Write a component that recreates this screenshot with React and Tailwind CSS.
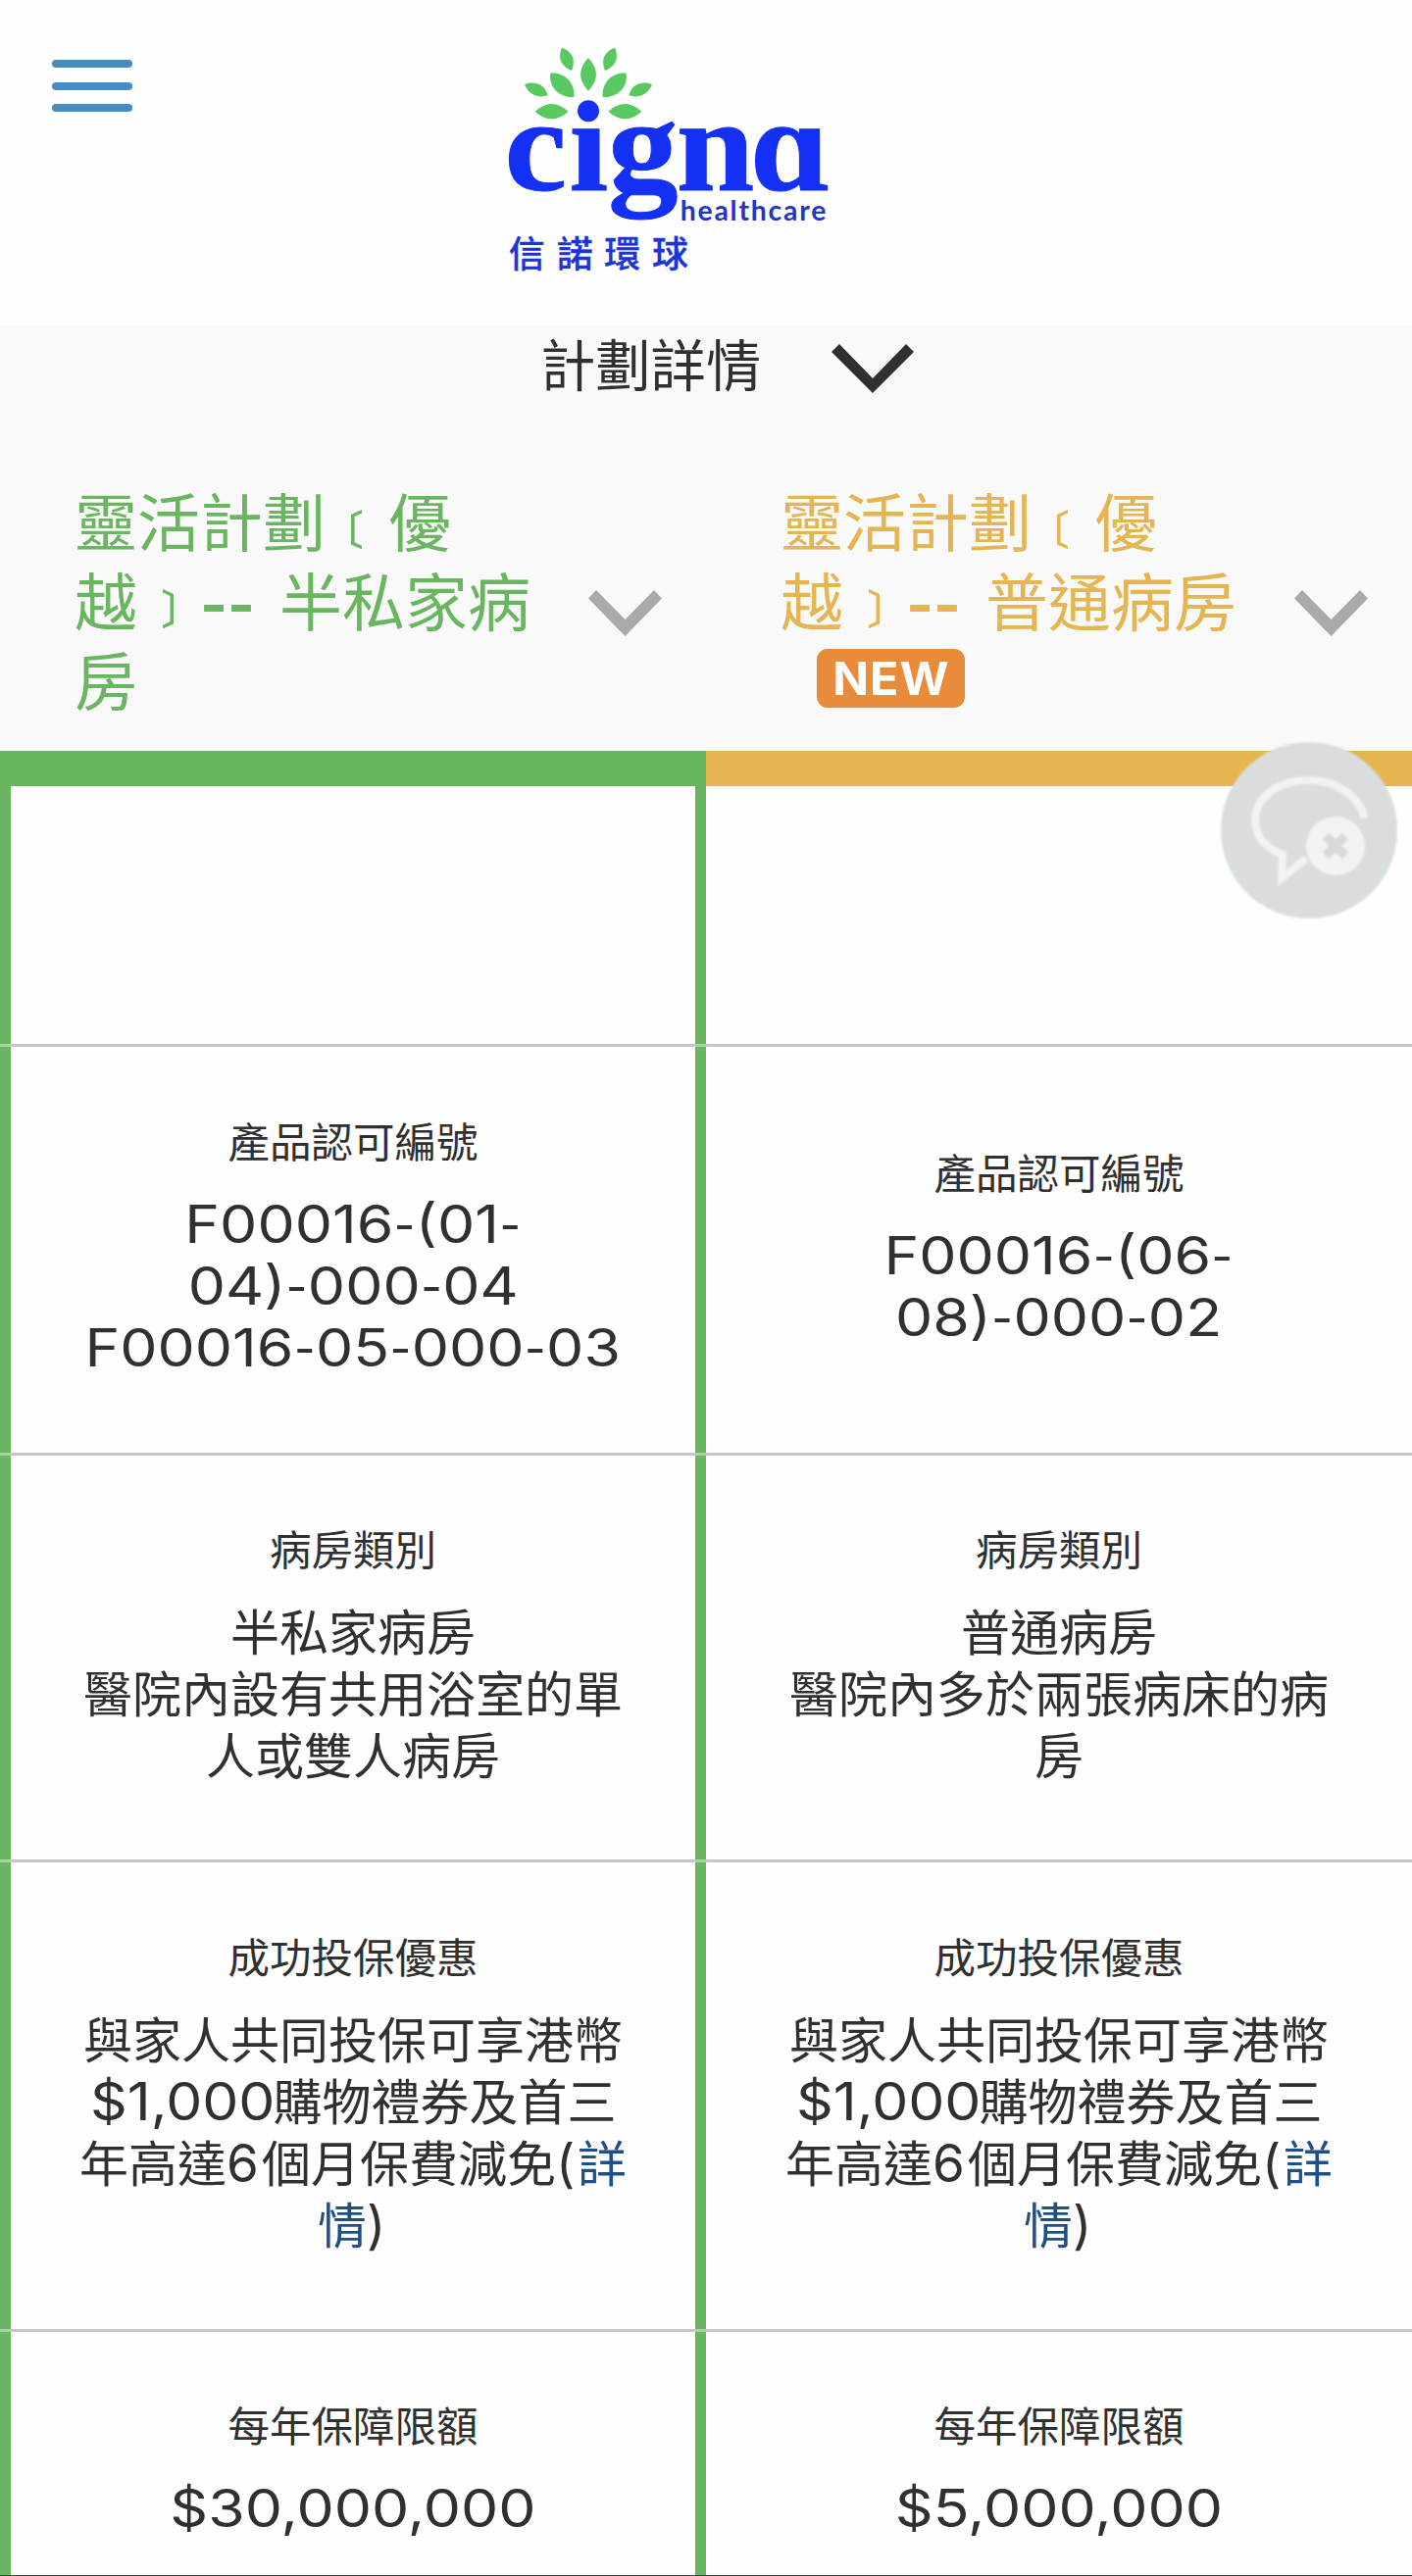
const offer = [
  '與家人共同投保可享港幣',
  <>
    <span className="inline-block w-[187px] origin-left scale-x-[1.11] text-left font-[Inter] text-[53px] leading-[63px]">$1,000</span>
    購物禮券及首三
  </>,
  <>
    年高達
    <span className="inline-block w-[36px] text-left font-[Inter] text-[53px] leading-[63px]">6</span>
    個月保費減免
    <span className="inline-block w-[22px] text-left font-[Inter] text-[53px] leading-[63px]">(</span>
    <a className="text-[#1c4f8b]">詳</a>
  </>,
  <>
    <a className="text-[#1c4f8b]">情</a>
    <span className="inline-block w-[22px] text-left font-[Inter] text-[53px] leading-[63px]">)</span>
  </>,
];

const rows = [
  {
    height: 'h-[417px]',
    label: '產品認可編號',
    left: [<Code text="F00016-(01-" />, <Code text="04)-000-04" />, <Code text="F00016-05-000-03" />],
    right: [<Code text="F00016-(06-" />, <Code text="08)-000-02" />],
  },
  {
    height: 'h-[415px]',
    label: '病房類別',
    left: ['半私家病房', '醫院內設有共用浴室的單', '人或雙人病房'],
    right: ['普通病房', '醫院內多於兩張病床的病', '房'],
  },
  { height: 'h-[479px]', label: '成功投保優惠', left: offer, right: offer },
  {
    height: 'h-[288px]',
    label: '每年保障限額',
    left: [<Code text="$30,000,000" />],
    right: [<Code text="$5,000,000" />],
  },
];

// Latin text alone on its line; the hyphens come from Lato, which has shorter ones
function Code({ text }) {
  return (
    <span className="inline-block scale-x-[1.145] font-[Inter] text-[53px] leading-[65px]">
      {text.split(/(-)/).map((part, i) =>
        part === '-' ? <span key={i} className="font-[Lato] leading-none">-</span> : part
      )}
    </span>
  );
}

const Leaves = () => (
  <>
    <path d="M197 281C232 250 264 250 299 281C264 312 232 312 197 281Z" />
    <path d="M244 164C284 160 320 190 316 237C273 240 238 208 244 164Z" />
    <path d="M279 86C304 94 325 118 309 156C280 145 264 120 279 86Z" />
    <path d="M165 199C190 187 227 195 236 232C210 240 180 235 165 199Z" />
  </>
);

const Logo = () => (
  <svg width="400" height="280" viewBox="0 0 1200 840" aria-label="Cigna Healthcare">
    <g fill="#5bc962">
      <path d="M360 117C392 152 392 184 360 218C328 184 328 152 360 117Z" />
      <Leaves />
      <g transform="translate(720 0) scale(-1 1)">
        <Leaves />
      </g>
    </g>
    <circle cx="360" cy="280" r="33" fill="#1430f5" />
    <text
      transform="scale(1.06 1)"
      x="98 284.5 396 594 806"
      y="523"
      fill="#1430f5"
      stroke="#1430f5"
      strokeWidth="3"
      fontSize="405"
      fontWeight="700"
      fontFamily="Liberation Serif, serif"
    >
      cıgnɑ
    </text>
    <text x="641" y="614" fill="#2036c8" fontSize="85" fontWeight="700" fontFamily="Lato, sans-serif" textLength="446">
      healthcare
    </text>
    <text x="116 263 409 555" y="760" fill="#1c35d8" stroke="#1c35d8" strokeWidth="1" fontSize="111" fontWeight="500" fontFamily="Noto Sans CJK TC, sans-serif">
      信諾環球
    </text>
  </svg>
);

const Chevron = () => (
  <svg className="mt-[113px]" width="75" height="47" viewBox="0 0 75 47" fill="#aaaaaa">
    <path d="M0 8.5L8 0L37.5 30L67 0L75 8.5L37.5 47Z" />
  </svg>
);

const Dashes = () => (
  <span className="inline-block w-[81px] font-[Inter] text-[60px] leading-none font-bold">--</span>
);

const Rail = () => <div className="border-b-[3px] border-[#a8d3a4] bg-[#6ab660]" />;

const Cell = ({ label, lines }) => (
  <div className="flex flex-col items-center justify-center gap-[21px] border-b-[3px] border-[#c6c6c6] pb-[15px] whitespace-nowrap">
    <p className="text-[42.5px] leading-[63px]">{label}</p>
    <div className="text-center text-[50px] leading-[63px]">
      {lines.map((line, i) => (
        <div key={i} className="h-[63px]">{line}</div>
      ))}
    </div>
  </div>
);

const ChatButton = () => (
  <button className="absolute top-[757px] left-[1245px] blur-[1px]">
    <svg width="180" height="180" viewBox="0 0 180 180" fill="none">
      <circle cx="90" cy="90" r="90" fill="#d9dddd" />
      <path
        d="M147 78C141 53 115 39 90 39C58 39 35 57 35 80C35 96 46 108 63 115L62 139L87 119"
        stroke="#f1f3f3"
        strokeWidth="8"
      />
      <circle cx="117" cy="106" r="30" fill="#f1f3f3" />
      <path d="M107 96L127 116M127 96L107 116" stroke="#d5d9d9" strokeWidth="9" />
    </svg>
  </button>
);

const App = () => (
  <div className="relative w-[1440px] bg-[#2f4a50] pb-px font-['Noto_Sans_CJK_TC',sans-serif] text-[#303030]">
    <div className="h-[2627px] overflow-hidden bg-[#fefefe]">

      {/* Header */}
      <header className="flex h-[332px] items-start">
        <button className="mt-[61px] ml-[53px] flex w-[82px] flex-col gap-[14.5px]">
          <span className="h-2 w-full rounded-full bg-[#468cc4]" />
          <span className="h-2 w-full rounded-full bg-[#468cc4]" />
          <span className="h-2 w-full rounded-full bg-[#468cc4]" />
        </button>
        <div className="mt-5 ml-[345px]">
          <Logo />
        </div>
      </header>

      {/* Plan titles */}
      <section className="h-[433.5px] bg-[#f9f9f9]">
        <div className="flex h-[157px] items-start pl-[551px]">
          <h1 className="w-[225px] text-[56.3px] leading-[76px] whitespace-nowrap">計劃詳情</h1>
          <svg className="mt-[19px] ml-[72px]" width="84" height="50" viewBox="0 0 84 50" fill="#303030">
            <path d="M0 8L8 0L42 35L76 0L84 8L42 50Z" />
          </svg>
        </div>
        <div className="grid grid-cols-2 text-[64px] leading-[81px] whitespace-nowrap">
          <div className="flex pl-[76px] text-[#6ab660]">
            <h2 className="w-[524px]">
              靈活計劃﹝優<br />
              越﹞<Dashes />半私家病<br />房
            </h2>
            <Chevron />
          </div>
          <div className="flex pl-[76px] text-[#e5b551]">
            <h2 className="w-[524px]">
              靈活計劃﹝優<br />
              越﹞<Dashes />普通病房
              <span className="mt-[11px] ml-[37px] flex h-[60px] w-[151px] items-center justify-center rounded-[11px] bg-[#e88b3b] font-[Inter] text-[46px] leading-[60px] font-bold tracking-[1px] text-white">
                <span className="scale-x-105">NEW</span>
              </span>
            </h2>
            <Chevron />
          </div>
        </div>
      </section>

      {/* Colour bars */}
      <div className="grid h-[36.5px] grid-cols-2">
        <div className="bg-[#6ab660]" />
        <div className="bg-[#e5b551]" />
      </div>

      {/* Comparison table */}
      <div className="grid h-[266px] grid-cols-[11px_698px_11px_720px]">
        <Rail />
        <div className="border-b-[3px] border-[#c6c6c6]" />
        <Rail />
        <div className="border-b-[3px] border-[#c6c6c6]" />
      </div>
      {rows.map((row) => (
        <div key={row.label} className={`grid grid-cols-[11px_698px_11px_720px] ${row.height}`}>
          <Rail />
          <Cell label={row.label} lines={row.left} />
          <Rail />
          <Cell label={row.label} lines={row.right} />
        </div>
      ))}
    </div>

    <ChatButton />
  </div>
);

export default App;
